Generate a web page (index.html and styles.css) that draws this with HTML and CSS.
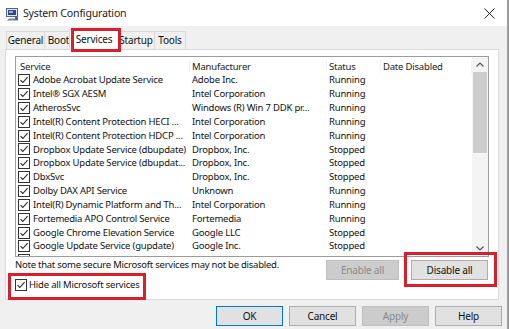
FILE: index.html
```html
<!DOCTYPE html>
<html>
<head>
<meta charset="utf-8">
<link rel="stylesheet" href="styles.css">
</head>
<body>
<div class="window">
  <div class="titlebar">
    <svg class="appicon" width="15" height="14" viewBox="0 0 15 14">
      <rect x="1.5" y="1.5" width="11" height="8" fill="#dfe6ee" stroke="#5b6470"/>
      <rect x="3" y="3" width="8" height="5" fill="#2b4a8c"/>
      <rect x="4" y="4" width="4" height="2" fill="#8fb3e8"/>
      <path d="M4 11.5h7l2 2H2z" fill="#7a828c"/>
      <path d="M10 9l3 1.5v3l-3-1.5z" fill="#3b5fa8"/>
    </svg>
    <span class="title">System Configuration</span>
    <svg class="close" width="11" height="11" viewBox="0 0 11 11"><path d="M0.5 0.5l10 10M10.5 0.5l-10 10" stroke="#222" stroke-width="1"/></svg>
  </div>

  <div class="tabs">
    <div class="tab t-general">General</div>
    <div class="tab t-boot">Boot</div>
    <div class="tab active t-services">Services</div>
    <div class="tab t-startup">Startup</div>
    <div class="tab t-tools">Tools</div>
  </div>

  <div class="panel">
    <div class="list">
      <div class="table">
        <div class="row head"><span>Service</span><span>Manufacturer</span><span>Status</span><span>Date Disabled</span></div>
        <div class="row"><span class="svc"><i class="cb"></i>Adobe Acrobat Update Service</span><span>Adobe Inc.</span><span>Running</span><span></span></div>
        <div class="row"><span class="svc"><i class="cb"></i>Intel® SGX AESM</span><span>Intel Corporation</span><span>Running</span><span></span></div>
        <div class="row"><span class="svc"><i class="cb"></i>AtherosSvc</span><span>Windows (R) Win 7 DDK pr...</span><span>Running</span><span></span></div>
        <div class="row"><span class="svc"><i class="cb"></i>Intel(R) Content Protection HECI ...</span><span>Intel Corporation</span><span>Running</span><span></span></div>
        <div class="row"><span class="svc"><i class="cb"></i>Intel(R) Content Protection HDCP ...</span><span>Intel Corporation</span><span>Running</span><span></span></div>
        <div class="row"><span class="svc"><i class="cb"></i>Dropbox Update Service (dbupdate)</span><span>Dropbox, Inc.</span><span>Stopped</span><span></span></div>
        <div class="row"><span class="svc"><i class="cb"></i>Dropbox Update Service (dbupdat...</span><span>Dropbox, Inc.</span><span>Stopped</span><span></span></div>
        <div class="row"><span class="svc"><i class="cb"></i>DbxSvc</span><span>Dropbox, Inc.</span><span>Stopped</span><span></span></div>
        <div class="row"><span class="svc"><i class="cb"></i>Dolby DAX API Service</span><span>Unknown</span><span>Running</span><span></span></div>
        <div class="row"><span class="svc"><i class="cb"></i>Intel(R) Dynamic Platform and Th...</span><span>Intel Corporation</span><span>Running</span><span></span></div>
        <div class="row"><span class="svc"><i class="cb"></i>Fortemedia APO Control Service</span><span>Fortemedia</span><span>Running</span><span></span></div>
        <div class="row"><span class="svc"><i class="cb"></i>Google Chrome Elevation Service</span><span>Google LLC</span><span>Stopped</span><span></span></div>
        <div class="row"><span class="svc"><i class="cb"></i>Google Update Service (gupdate)</span><span>Google Inc.</span><span>Stopped</span><span></span></div>
        <div class="row"><span class="svc"><i class="cb"></i></span><span></span><span></span><span></span></div>
      </div>
      <div class="scrollbar">
        <div class="arrow"><svg width="8" height="5" viewBox="0 0 8 5"><path d="M0.5 4.5L4 1l3.5 3.5" fill="none" stroke="#555" stroke-width="1.2"/></svg></div>
        <div class="thumb"></div>
        <div class="track"></div>
        <div class="arrow"><svg width="8" height="5" viewBox="0 0 8 5"><path d="M0.5 0.5L4 4l3.5-3.5" fill="none" stroke="#555" stroke-width="1.2"/></svg></div>
      </div>
    </div>

    <div class="footer">
      <div class="left">
        <div class="note">Note that some secure Microsoft services may not be disabled.</div>
        <div class="hide"><i class="cb"></i>Hide all Microsoft services</div>
      </div>
      <div class="actions">
        <div class="btn disabled enable">Enable all</div>
        <div class="btn disable">Disable all</div>
      </div>
    </div>
  </div>

  <div class="buttons">
    <div class="btn default">OK</div>
    <div class="btn">Cancel</div>
    <div class="btn disabled">Apply</div>
    <div class="btn">Help</div>
  </div>

  <div class="mark mark-tab"></div>
  <div class="mark mark-disable"></div>
  <div class="mark mark-hide"></div>
</div>
</body>
</html>
```

FILE: styles.css
```css
* { box-sizing: border-box; }
html, body { margin: 0; padding: 0; }
body {
  width: 509px;
  height: 329px;
  overflow: hidden;
  background: #f0f0f0;
  font-family: "Noto Sans", "Open Sans", sans-serif;
  font-size: 9.5px;
  letter-spacing: -0.2px;
  color: #111;
}
.window {
  position: relative;
  width: 509px;
  height: 329px;
  border-right: 2px solid #9a9a9a;
  background: #f0f0f0;
}
.titlebar {
  height: 26px;
  background: #fff;
  display: flex;
  align-items: center;
  padding-left: 5px;
  padding-right: 12px;
}
.appicon { margin-right: 3px; margin-top: 2px; }
.title {
  font-size: 10.6px;
  letter-spacing: -0.2px;
  color: #222;
  flex: 1;
}
.close { margin-top: 1px; }

.tabs {
  height: 23px;
  display: flex;
  align-items: flex-end;
  padding-left: 6px;
  position: relative;
  z-index: 1;
}
.tab {
  height: 18px;
  line-height: 16px;
  border: 1px solid #d9d9d9;
  border-bottom: none;
  background: #f0f0f0;
  margin-right: -1px;
  text-align: center;
  font-size: 10px;
}
.t-general { width: 39px; }
.t-boot { width: 29px; }
.t-startup { width: 38px; }
.t-tools { width: 32px; }
.tab.active {
  width: 50px;
  height: 21px;
  line-height: 19px;
  background: #fff;
  margin: 0 -2px 0 -3px;
  position: relative;
  z-index: 2;
  top: 1px;
}
.panel {
  margin-left: 5px;
  width: 494px;
  height: 251px;
  background: #fff;
  border: 1px solid #d9d9d9;
  padding: 6px 0 0 9px;
}
.list {
  width: 474px;
  height: 201px;
  border: 1px solid #9c9c9c;
  display: flex;
  overflow: hidden;
}
.table {
  flex: 1;
  padding-top: 2.5px;
  overflow: hidden;
}
.row {
  display: grid;
  grid-template-columns: 174px 137px 54px 1fr;
  height: 13.85px;
  line-height: 13.85px;
  white-space: nowrap;
}
.row span { padding-left: 2px; overflow: hidden; }
.row.head span { color: #222; border-right: 1px solid #f2f2f2; }
.row.head span:first-child { padding-left: 4px; }
.row .svc {
  display: flex;
  align-items: center;
  gap: 3px;
  padding-left: 2px;
}
.cb {
  display: inline-block;
  flex: none;
  width: 12px;
  height: 12px;
  border: 1px solid #333;
  background: #fff url("data:image/svg+xml,%3Csvg xmlns='http://www.w3.org/2000/svg' width='10' height='10' viewBox='0 0 10 10'%3E%3Cpath d='M1.5 5.2l2.3 2.3L8.6 2.2' fill='none' stroke='%23222' stroke-width='1.1'/%3E%3C/svg%3E") center / 10px 10px no-repeat;
}
.scrollbar {
  width: 16px;
  display: flex;
  flex-direction: column;
  background: #f4f4f4;
}
.arrow {
  height: 15px;
  display: flex;
  align-items: center;
  justify-content: center;
}
.thumb {
  height: 81px;
  margin: 0 1px;
  background: #cdcdcd;
}
.track { flex: 1; }

.footer {
  display: flex;
  justify-content: space-between;
  padding-right: 10px;
}
.left { padding-top: 1px; }
.note {
  line-height: 14px;
  letter-spacing: -0.25px;
}
.hide {
  display: flex;
  align-items: center;
  gap: 2px;
  margin-top: 6px;
}
.actions {
  display: flex;
  gap: 12px;
  padding-top: 3px;
}
.btn {
  height: 20px;
  border: 1px solid #adadad;
  background: #e1e1e1;
  display: flex;
  align-items: center;
  justify-content: center;
  color: #111;
  font-size: 10px;
}
.btn.disabled {
  background: #cccccc;
  border-color: #bfbfbf;
  color: #8a8a8a;
}
.enable { width: 73px; }
.disable { width: 77px; }
.buttons {
  display: flex;
  justify-content: flex-end;
  gap: 6px;
  padding: 6px 5px 0 0;
}
.buttons .btn { width: 67px; }
.btn.default { border: 1px solid #0078d7; }

.mark {
  position: absolute;
  border: 3px solid #d7202e;
  pointer-events: none;
  z-index: 5;
}
.mark-tab { left: 71px; top: 28px; width: 50px; height: 24px; }
.mark-disable { left: 404px; top: 252px; width: 93px; height: 35px; }
.mark-hide { left: 8px; top: 273px; width: 138px; height: 27px; }
```
